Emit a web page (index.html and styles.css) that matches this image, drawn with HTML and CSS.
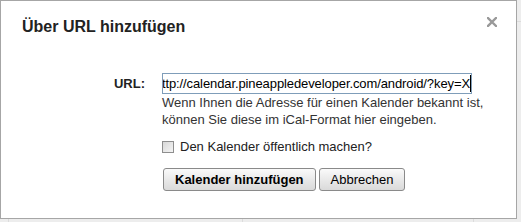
FILE: index.html
```html
<!DOCTYPE html>
<html lang="de">
<head>
    <meta charset="UTF-8">
    <title>Über URL hinzufügen</title>
    <link rel="stylesheet" href="styles.css">
</head>
<body>
    <div class="dialog">
        <h1 class="dialog-title">Über URL hinzufügen</h1>
        <span class="close" title="Schließen">
            <svg width="10" height="10" viewBox="0 0 10 10">
                <path d="M1 1 L9 9 M9 1 L1 9" stroke="#999" stroke-width="2.4" stroke-linecap="square"/>
            </svg>
        </span>

        <div class="form">
            <label class="form-label">URL:</label>
            <div class="form-field">
                <div class="url-input">
                    <span class="url-text">http://calendar.pineappledeveloper.com/android/?key=X</span><span class="caret"></span>
                </div>
                <p class="hint">Wenn Ihnen die Adresse für einen Kalender bekannt ist,<br>können Sie diese im iCal-Format hier eingeben.</p>
                <div class="check-row">
                    <span class="checkbox"></span>
                    <span>Den Kalender öffentlich machen?</span>
                </div>
                <div class="buttons">
                    <button class="btn btn-primary">Kalender hinzufügen</button>
                    <button class="btn">Abbrechen</button>
                </div>
            </div>
        </div>
    </div>
</body>
</html>
```

FILE: styles.css
```css
* {
    margin: 0;
    padding: 0;
    box-sizing: border-box;
}

body {
    font-family: 'Liberation Sans', Arial, sans-serif;
    font-size: 13px;
    color: #222;
    width: 521px;
    height: 222px;
    overflow: hidden;
    background-color: #ededed;
    background-image:
        linear-gradient(to right, transparent 8px, #dcdcdc 8px, #dcdcdc 9px, transparent 9px),
        linear-gradient(to right, transparent 242px, #dcdcdc 242px, #dcdcdc 243px, transparent 243px),
        linear-gradient(to right, transparent 473px, #dcdcdc 473px, #dcdcdc 474px, transparent 474px),
        linear-gradient(to bottom, transparent 21px, #dcdcdc 21px, #dcdcdc 22px, transparent 22px);
}

.dialog {
    position: relative;
    width: 517px;
    height: 219px;
    background: #fff;
    border: 1px solid #a6a6a6;
    padding: 16px 0 0 21px;
}

.dialog-title {
    font-size: 16px;
    font-weight: bold;
    line-height: 20px;
    color: #222;
}

.close {
    position: absolute;
    top: 16px;
    right: 19px;
    width: 10px;
    height: 10px;
    display: flex;
    cursor: pointer;
}

.form {
    display: grid;
    grid-template-columns: 123px 310px;
    column-gap: 17px;
    margin-top: 36px;
}

.form-label {
    text-align: right;
    font-weight: bold;
    line-height: 21px;
    color: #222;
}

.form-field {
    display: flex;
    flex-direction: column;
}

.url-input {
    height: 21px;
    border: 1px solid #7f9db9;
    display: flex;
    justify-content: flex-end;
    align-items: center;
    overflow: hidden;
    white-space: nowrap;
    color: #000;
}

.url-text {
    flex-shrink: 0;
    letter-spacing: -0.1px;
}

.caret {
    flex-shrink: 0;
    width: 1px;
    height: 17px;
    background: #000;
}

.hint {
    line-height: 17px;
    color: #333;
    white-space: nowrap;
}

.check-row {
    display: flex;
    align-items: center;
    gap: 6px;
    line-height: 17px;
    margin-top: 10px;
    color: #222;
}

.checkbox {
    width: 12px;
    height: 12px;
    border: 1px solid #8e8e8e;
    background: linear-gradient(to bottom right, #d8d8d8, #f4f4f4);
}

.buttons {
    display: flex;
    gap: 3px;
    margin-top: 13px;
    margin-left: 1px;
}

.btn {
    font-family: 'Liberation Sans', Arial, sans-serif;
    font-size: 13px;
    height: 23px;
    padding: 0 11px;
    color: #000;
    border: 1px solid #8a8a8a;
    border-radius: 3px;
    background: linear-gradient(to bottom, #fafafa, #e6e6e6 60%, #dadada);
    cursor: pointer;
}

.btn-primary {
    font-weight: bold;
}
```
